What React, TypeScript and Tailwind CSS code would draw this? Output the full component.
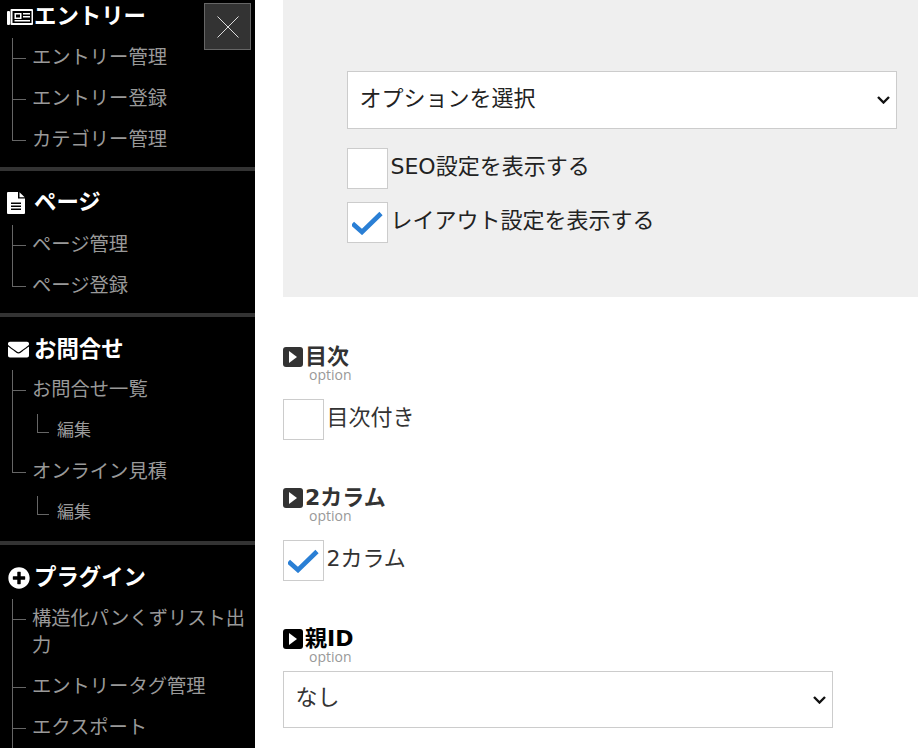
import React from "react";
import { FaEnvelope, FaPlusCircle } from "react-icons/fa";

const font = { fontFamily: '"DejaVu Sans","Noto Sans CJK JP",sans-serif' };

function Item({ label, last, subs }: { label: string; last?: boolean; subs?: string[] }) {
  return (
    <li className="relative pl-[20px]">
      <span className={`absolute left-0 top-0 w-[14px] border-l border-[#666] ${last ? "h-[21px] border-b" : "h-full"}`} />
      <span className="absolute left-0 top-[20px] w-[14px] border-b border-[#666]" />
      <a className="block py-[7px] text-[19.3px] leading-[26.88px] text-[#999]">{label}</a>
      {subs && (
        <ul className="pl-[5px]">
          {subs.map((s) => (
            <li key={s} className="relative pl-[20px]">
              <span className="absolute left-0 top-[3px] h-[19px] w-[12px] border-b border-l border-[#666]" />
              <a className="block pt-[6px] pb-[8px] text-[17px] leading-[26.88px] text-[#999]">{s}</a>
            </li>
          ))}
        </ul>
      )}
    </li>
  );
}

function Section({ icon, title, children, head, gap, end }: { icon: React.ReactNode; title: string; children: React.ReactNode; head: string; gap: string; end: string }) {
  return (
    <section className={`${head} ${end}`}>
      <h2 className="flex h-[32px] items-center gap-[1px] pl-[7px] text-[22.4px] font-bold text-white">
        <span className="flex w-[26px] justify-start">{icon}</span>
        <span>{title}</span>
      </h2>
      <ul className={`${gap} ml-[12px]`}>{children}</ul>
    </section>
  );
}

function Check({ checked }: { checked?: boolean }) {
  return (
    <span className="flex h-[41px] w-[41px] shrink-0 items-center justify-center border border-[#ccc] bg-white">
      {checked && (
        <svg width="32" height="24" viewBox="0 0 32 24" fill="none">
          <path d="M0.5 12.5 L10 21 L29 2.5" stroke="#2a7fd5" strokeWidth="4.6" />
        </svg>
      )}
    </span>
  );
}

function CheckRow({ checked, label, color, gap }: { checked?: boolean; label: string; color: string; gap: string }) {
  return (
    <label className={`${gap} flex items-center gap-[2.5px] text-[22px] ${color}`}>
      <Check checked={checked} />
      <span className="pb-[4px]">{label}</span>
    </label>
  );
}

function Heading({ title, color }: { title: string; color: string }) {
  return (
    <div>
      <h3 className={`flex h-[19px] items-center text-[22px] leading-[19px] font-bold ${color}`}>
        <svg width="20" height="20" viewBox="0 0 20 20" className="mr-[2px] shrink-0">
          <rect width="20" height="20" rx="3" fill="currentColor" />
          <path d="M6 4 L14 10 L6 16 Z" fill="#fff" />
        </svg>
        {title}
      </h3>
      <p className="pl-[26px] text-[14px] leading-[18px] text-[#999]" style={{ fontFamily: '"Open Sans",sans-serif' }}>option</p>
    </div>
  );
}

function Select({ label, className, color }: { label: string; className: string; color: string }) {
  return (
    <div className={`relative ${className}`}>
      <select className={`block h-full w-full appearance-none border border-[#ccc] bg-white pb-[4px] pl-[11.5px] text-[22px] ${color}`}>
        <option>{label}</option>
      </select>
      <svg width="13" height="8" viewBox="0 0 13 8" fill="none" stroke="#111" strokeWidth="2.4" className="pointer-events-none absolute top-1/2 right-[7px] -translate-y-1/2">
        <path d="M1 1 L6.5 6.5 L12 1" />
      </svg>
    </div>
  );
}

export default function App() {
  return (
    <div className="flex h-[748px] w-[918px] overflow-hidden bg-white" style={font}>
      <aside className="relative h-[748px] w-[255px] shrink-0 overflow-hidden bg-black">
        <Section
          head="pt-[1px]"
          gap="mt-[5px]"
          end="pb-[6px]"
          title="エントリー"
          icon={
            <svg width="26" height="16" viewBox="0 0 26 16" fill="#fff">
              <rect x="0" y="2" width="3" height="14" rx="1" />
              <rect x="3.5" y="0" width="22.5" height="16" rx="1" />
              <rect x="5.5" y="2" width="19" height="12" fill="#000" />
              <path fillRule="evenodd" d="M7.5 4h7v6h-7z M9 5.5v3h4v-3z" />
              <path d="M16 4h7v1.5h-7z M16 7h7v1.5h-7z M7.5 11h15.5v1.5H7.5z" />
            </svg>
          }
        >
          <Item label="エントリー管理" />
          <Item label="エントリー登録" />
          <Item label="カテゴリー管理" last />
        </Section>
        <Section
          head="border-t-4 border-[#333] pt-[16px]"
          gap="mt-[6px]"
          end="pb-[7px]"
          title="ページ"
          icon={
            <svg width="18" height="22" viewBox="0 0 18 22">
              <path fill="#fff" d="M1 0h10v6.5h7V21a1 1 0 0 1-1 1H1a1 1 0 0 1-1-1V1a1 1 0 0 1 1-1z" />
              <path fill="#fff" d="M12.5 0.3 L17.7 5.2 H12.5 Z" />
              <path fill="#000" d="M4 10.5h10v1.5H4z M4 13.5h10v1.5H4z M4 16.5h10v1.5H4z" />
            </svg>
          }
        >
          <Item label="ページ管理" />
          <Item label="ページ登録" last />
        </Section>
        <Section
          head="border-t-4 border-[#333] pt-[16px]"
          gap="mt-[5px]"
          end="pb-[7px]"
          title="お問合せ"
          icon={<span className="pl-[1px]"><FaEnvelope size={21} color="#fff" /></span>}
        >
          <Item label="お問合せ一覧" subs={["編集"]} />
          <Item label="オンライン見積" subs={["編集"]} last />
        </Section>
        <Section
          head="border-t-4 border-[#333] pt-[17px]"
          gap="mt-[5.5px]"
          end="pb-[7px]"
          title="プラグイン"
          icon={<span className="pl-[1px]"><FaPlusCircle size={22} color="#fff" /></span>}
        >
          <Item label="構造化パンくずリスト出力" />
          <Item label="エントリータグ管理" />
          <Item label="エクスポート" />
        </Section>
        <button className="absolute top-[3px] left-[204px] flex h-[47px] w-[47px] items-center justify-center border border-[#666] bg-[#333]">
          <svg width="22" height="22" viewBox="0 0 22 22" fill="none" stroke="#ddd" strokeWidth="1">
            <path d="M0.5 0.5 L21.5 21.5 M21.5 0.5 L0.5 21.5" />
          </svg>
        </button>
      </aside>
      <main className="min-w-0 flex-1 pl-[28px]">
        <div className="h-[297px] bg-[#efefef] pt-[71px] pr-[21px] pl-[64px]">
          <Select label="オプションを選択" className="h-[58px] w-full" color="text-[#222]" />
          <CheckRow label="SEO設定を表示する" color="text-[#222]" gap="mt-[19px]" />
          <CheckRow checked label="レイアウト設定を表示する" color="text-[#222]" gap="mt-[13px]" />
        </div>
        <div className="pt-[50px]">
          <Heading title="目次" color="text-[#333]" />
          <CheckRow label="目次付き" color="text-[#333]" gap="mt-[15px]" />
          <div className="mt-[48px]">
            <Heading title="2カラム" color="text-[#333]" />
          </div>
          <CheckRow checked label="2カラム" color="text-[#333]" gap="mt-[15px]" />
          <div className="mt-[48px]">
            <Heading title="親ID" color="text-black" />
          </div>
          <Select label="なし" className="mt-[5px] h-[57px] w-[550px]" color="text-[#333]" />
        </div>
      </main>
    </div>
  );
}
